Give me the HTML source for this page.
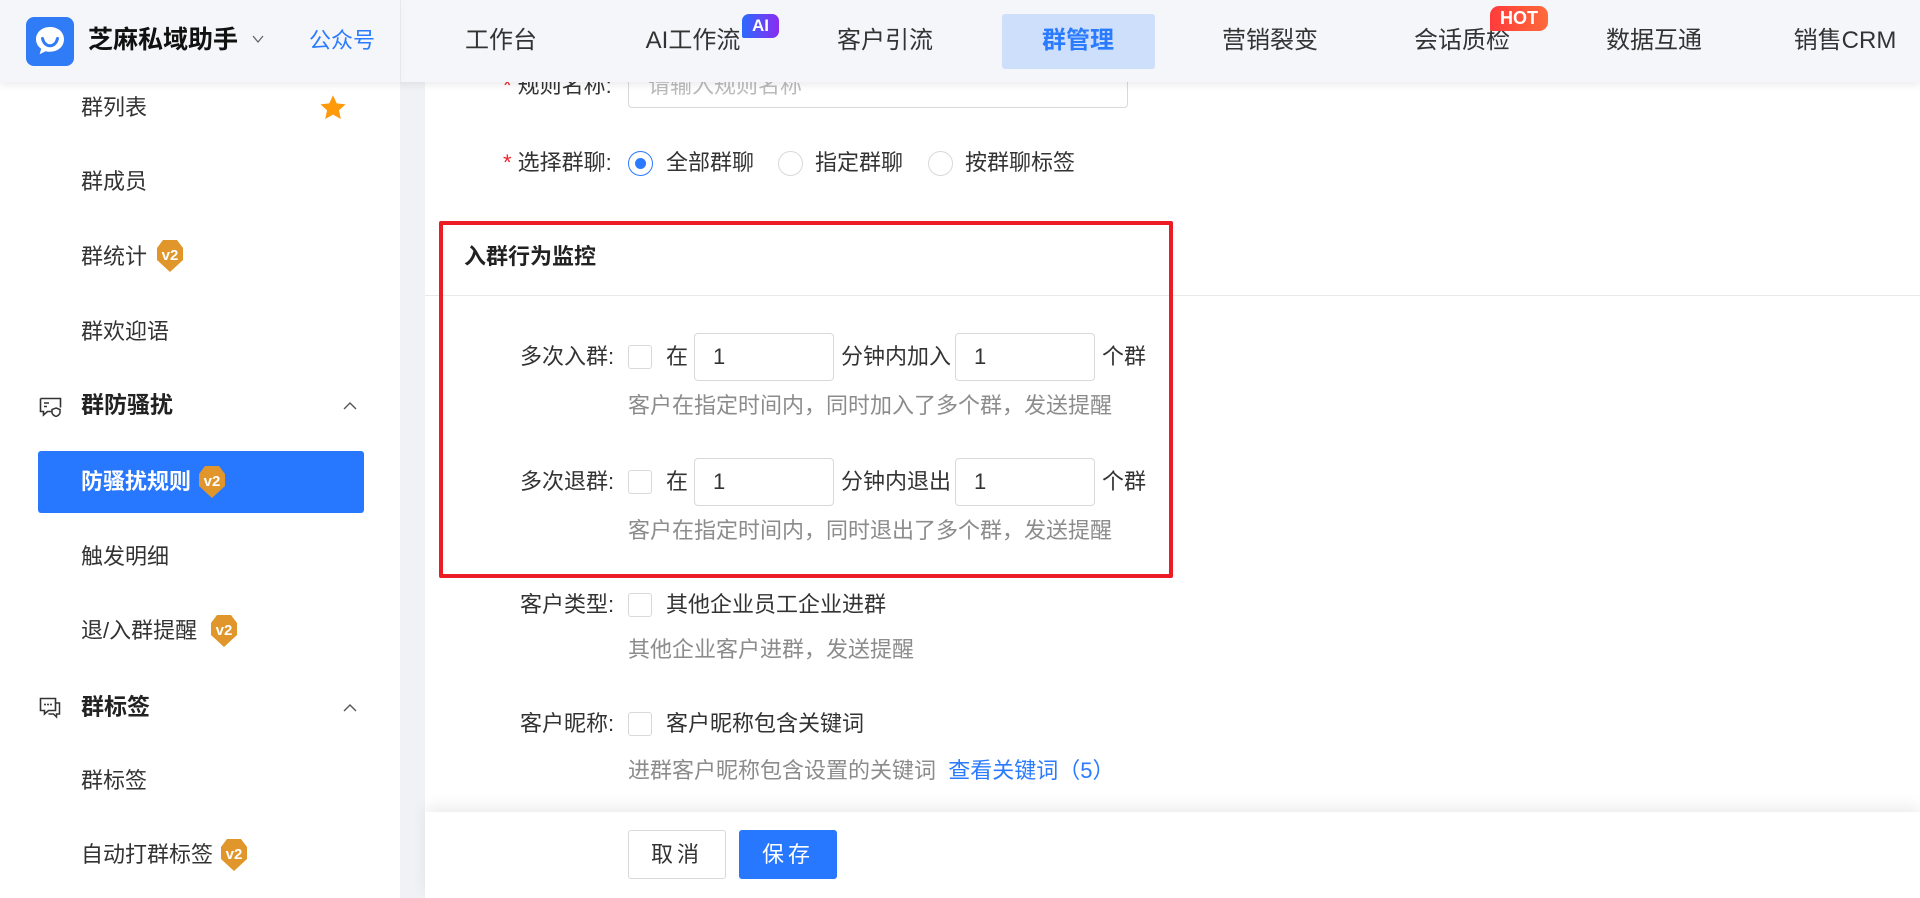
<!DOCTYPE html>
<html><head><meta charset="utf-8">
<style>
*{margin:0;padding:0;box-sizing:border-box}
body{width:1920px;height:898px;overflow:hidden;background:#fff;font-family:"Liberation Sans","Noto Sans CJK SC",sans-serif;color:#333;position:relative}
.a{position:absolute;white-space:nowrap}
.hdr{left:0;top:0;width:1920px;height:82px;background:#f5f6fa;box-shadow:0 3px 8px rgba(0,0,0,.08);z-index:5}
.nav{top:41px;transform:translate(-50%,-50%);font-size:24px;color:#333;line-height:1}
.side{left:0;top:82px;width:400px;height:816px;background:#fff}
.gap{left:400px;top:82px;width:25px;height:816px;background:#f0f2f5}
.si{left:81px;font-size:22px;line-height:1;transform:translateY(-50%);color:#333}
.lbl{font-size:22px;line-height:1;transform:translateY(-50%);color:#333}
.hint{font-size:22px;line-height:1;transform:translateY(-50%);color:#8c8c8c}
.cb{width:24px;height:24px;border:1px solid #d9d9d9;border-radius:3px;background:#fff}
.inp{border:1px solid #d9d9d9;border-radius:4px;background:#fff;font-size:22px;color:#333;padding-left:18px;display:flex;align-items:center}
.radio{width:25px;height:25px;border:1px solid #d9d9d9;border-radius:50%;background:#fff}
</style></head><body>
<div class="a side"></div>
<div class="a gap"></div>

<div class="a hdr">
  <div class="a" style="left:400px;top:0;width:1px;height:82px;background:#e6e8ee;box-shadow:2px 0 6px rgba(0,0,0,.06)"></div>
  <svg class="a" style="left:26px;top:17px" width="48" height="49" viewBox="0 0 48 49">
    <rect width="48" height="49" rx="8" fill="#2f7cf6"/>
    <path d="M24 10c-8.3 0-14 5.6-14 12.3 0 4 2 7.3 5.2 9.5l-1.6 5.4 6-3c1.4.4 2.9.6 4.4.6 8.3 0 14-5.6 14-12.5S32.3 10 24 10z" fill="#fff"/>
    <path d="M16.5 21.5c1.2 5 4.2 7.2 7.5 7.2s6.3-2.2 7.5-7.2" fill="none" stroke="#2f7cf6" stroke-width="3" stroke-linecap="round"/>
  </svg>
  <div class="a" style="left:88px;top:28px;font-size:25px;font-weight:bold;color:#111;line-height:1">芝麻私域助手</div>
  <svg class="a" style="left:252px;top:35px" width="12" height="9" viewBox="0 0 12 9"><path d="M1 1l5 6 5-6" fill="none" stroke="#666" stroke-width="1.3"/></svg>
  <div class="a" style="left:309px;top:30px;font-size:22px;color:#2a7bff;line-height:1">公众号</div>

  <div class="a" style="left:1002px;top:14px;width:153px;height:55px;background:#cddffa;border-radius:3px"></div>
  <div class="a nav" style="left:501px">工作台</div>
  <div class="a nav" style="left:693px">AI工作流</div>
  <div class="a" style="left:742px;top:14px;width:37px;height:24px;border-radius:7px 7px 7px 2px;background:linear-gradient(90deg,#2b6bff,#8a2cf0);color:#fff;font-size:17px;font-weight:bold;text-align:center;line-height:24px">AI</div>
  <div class="a nav" style="left:885px">客户引流</div>
  <div class="a nav" style="left:1078px;color:#2a7bff;font-weight:bold">群管理</div>
  <div class="a nav" style="left:1270px">营销裂变</div>
  <div class="a nav" style="left:1462px">会话质检</div>
  <div class="a" style="left:1490px;top:6px;width:58px;height:25px;border-radius:9px 9px 9px 2px;background:linear-gradient(90deg,#ff3b3b,#ff6a3a);color:#fff;font-size:18px;font-weight:bold;text-align:center;line-height:25px">HOT</div>
  <div class="a nav" style="left:1654px">数据互通</div>
  <div class="a nav" style="left:1845px">销售CRM</div>
</div>

<div class="a si" style="top:108px">群列表</div>
<svg class="a" style="left:319px;top:94px" width="28" height="27" viewBox="0 0 24 23"><path d="M12 1l3.2 7 7.6.8-5.7 5.1 1.6 7.5L12 17.6 5.3 21.4l1.6-7.5L1.2 8.8 8.8 8z" fill="#ff9a0a"/></svg>
<div class="a si" style="top:182px">群成员</div>
<div class="a si" style="top:257px">群统计</div>
<div class="a si" style="top:332px">群欢迎语</div>
<svg class="a" style="left:39px;top:397px" width="24" height="20" viewBox="0 0 24 20"><path d="M1.5 1.5h20v9M1.5 1.5v13h3v3.5l4-3.5h5" fill="none" stroke="#333" stroke-width="1.6"/><path d="M5 6h5M5 9.5h3" stroke="#333" stroke-width="1.5"/><path d="M17 11l4 1.5v3c0 2-2 3-4 4-2-1-4-2-4-4v-3z" fill="none" stroke="#333" stroke-width="1.5"/></svg>
<div class="a si" style="top:405px;font-weight:bold;font-size:23px;color:#222">群防骚扰</div>
<svg class="a" style="left:343px;top:401px" width="14" height="9" viewBox="0 0 14 9"><path d="M1 8l6-6 6 6" fill="none" stroke="#555" stroke-width="1.4"/></svg>
<div class="a" style="left:38px;top:451px;width:326px;height:62px;background:#2878ff;border-radius:3px"></div>
<div class="a si" style="top:482px;color:#fff;font-weight:bold">防骚扰规则</div>
<div class="a si" style="top:557px">触发明细</div>
<div class="a si" style="top:631px">退/入群提醒</div>
<svg class="a" style="left:39px;top:697px" width="22" height="22" viewBox="0 0 22 22"><path d="M1.5 1.5h15v12h-7l-4 3.5v-3.5h-4z" fill="none" stroke="#333" stroke-width="1.6"/><path d="M16.5 6h4v11h-3v3l-3-3h-5" fill="none" stroke="#333" stroke-width="1.5"/><circle cx="6" cy="7.5" r="1" fill="#333"/><circle cx="9" cy="7.5" r="1" fill="#333"/><circle cx="12" cy="7.5" r="1" fill="#333"/></svg>
<div class="a si" style="top:707px;font-weight:bold;font-size:23px;color:#222">群标签</div>
<svg class="a" style="left:343px;top:703px" width="14" height="9" viewBox="0 0 14 9"><path d="M1 8l6-6 6 6" fill="none" stroke="#555" stroke-width="1.4"/></svg>
<div class="a si" style="top:781px">群标签</div>
<div class="a si" style="top:855px">自动打群标签</div>

<svg width="0" height="0" style="position:absolute"><defs><g id="v2"><path d="M7 1h14l6 8v12l-13 12L1 21V9z" fill="#e0962a"/><text x="14" y="21" text-anchor="middle" font-size="15" font-weight="bold" fill="#fff" font-family="Liberation Sans">v2</text></g></defs></svg>
<div class="a" style="left:156px;top:239px"><svg width="28" height="34" viewBox="0 0 28 34"><use href="#v2"/></svg></div>
<div class="a" style="left:198px;top:465px"><svg width="28" height="34" viewBox="0 0 28 34"><use href="#v2"/></svg></div>
<div class="a" style="left:210px;top:614px"><svg width="28" height="34" viewBox="0 0 28 34"><use href="#v2"/></svg></div>
<div class="a" style="left:220px;top:838px"><svg width="28" height="34" viewBox="0 0 28 34"><use href="#v2"/></svg></div>

<div class="a" style="left:628px;top:60px;width:500px;height:48px;border:1px solid #d9d9d9;border-radius:4px"></div>
<div class="a hint" style="left:648px;top:86px;color:#bbb">请输入规则名称</div>
<div class="a lbl" style="left:503px;top:86px"><span style="color:#f5222d">*</span> 规则名称:</div>

<div class="a lbl" style="left:503px;top:163px"><span style="color:#f5222d">*</span> 选择群聊:</div>
<div class="a radio" style="left:628px;top:151px;border-color:#2a7bff"></div>
<div class="a" style="left:635px;top:158px;width:11px;height:11px;border-radius:50%;background:#2a7bff"></div>
<div class="a lbl" style="left:666px;top:163px">全部群聊</div>
<div class="a radio" style="left:778px;top:151px"></div>
<div class="a lbl" style="left:815px;top:163px">指定群聊</div>
<div class="a radio" style="left:928px;top:151px"></div>
<div class="a lbl" style="left:965px;top:163px">按群聊标签</div>

<div class="a" style="left:425px;top:295px;width:1495px;height:1px;background:#e8e8e8"></div>
<div class="a" style="left:439px;top:221px;width:734px;height:357px;border:4px solid #ec1c24;border-radius:2px"></div>
<div class="a" style="left:464px;top:257px;font-size:22px;font-weight:bold;color:#222;line-height:1;transform:translateY(-50%)">入群行为监控</div>

<div class="a lbl" style="left:520px;top:357px">多次入群:</div>
<div class="a cb" style="left:628px;top:345px"></div>
<div class="a lbl" style="left:666px;top:357px">在</div>
<div class="a inp" style="left:694px;top:333px;width:140px;height:48px">1</div>
<div class="a lbl" style="left:841px;top:357px">分钟内加入</div>
<div class="a inp" style="left:955px;top:333px;width:140px;height:48px">1</div>
<div class="a lbl" style="left:1102px;top:357px">个群</div>
<div class="a hint" style="left:628px;top:406px">客户在指定时间内，同时加入了多个群，发送提醒</div>

<div class="a lbl" style="left:520px;top:482px">多次退群:</div>
<div class="a cb" style="left:628px;top:470px"></div>
<div class="a lbl" style="left:666px;top:482px">在</div>
<div class="a inp" style="left:694px;top:458px;width:140px;height:48px">1</div>
<div class="a lbl" style="left:841px;top:482px">分钟内退出</div>
<div class="a inp" style="left:955px;top:458px;width:140px;height:48px">1</div>
<div class="a lbl" style="left:1102px;top:482px">个群</div>
<div class="a hint" style="left:628px;top:531px">客户在指定时间内，同时退出了多个群，发送提醒</div>

<div class="a lbl" style="left:520px;top:605px">客户类型:</div>
<div class="a cb" style="left:628px;top:593px"></div>
<div class="a lbl" style="left:666px;top:605px">其他企业员工企业进群</div>
<div class="a hint" style="left:628px;top:650px">其他企业客户进群，发送提醒</div>

<div class="a lbl" style="left:520px;top:724px">客户昵称:</div>
<div class="a cb" style="left:628px;top:712px"></div>
<div class="a lbl" style="left:666px;top:724px">客户昵称包含关键词</div>
<div class="a hint" style="left:628px;top:771px">进群客户昵称包含设置的关键词 <span style="color:#2a7bff">&nbsp;查看关键词（5）</span></div>

<div class="a" style="left:425px;top:812px;width:1495px;height:86px;background:#fff;box-shadow:0 -6px 14px rgba(0,0,0,.07)"></div>
<div class="a" style="left:628px;top:830px;width:98px;height:49px;border:1px solid #d9d9d9;border-radius:3px;font-size:22px;color:#333;text-align:center;line-height:47px;letter-spacing:4px">取消</div>
<div class="a" style="left:739px;top:830px;width:98px;height:49px;background:#2878ff;border-radius:3px;font-size:22px;color:#fff;text-align:center;line-height:49px;letter-spacing:4px">保存</div>
</body></html>
